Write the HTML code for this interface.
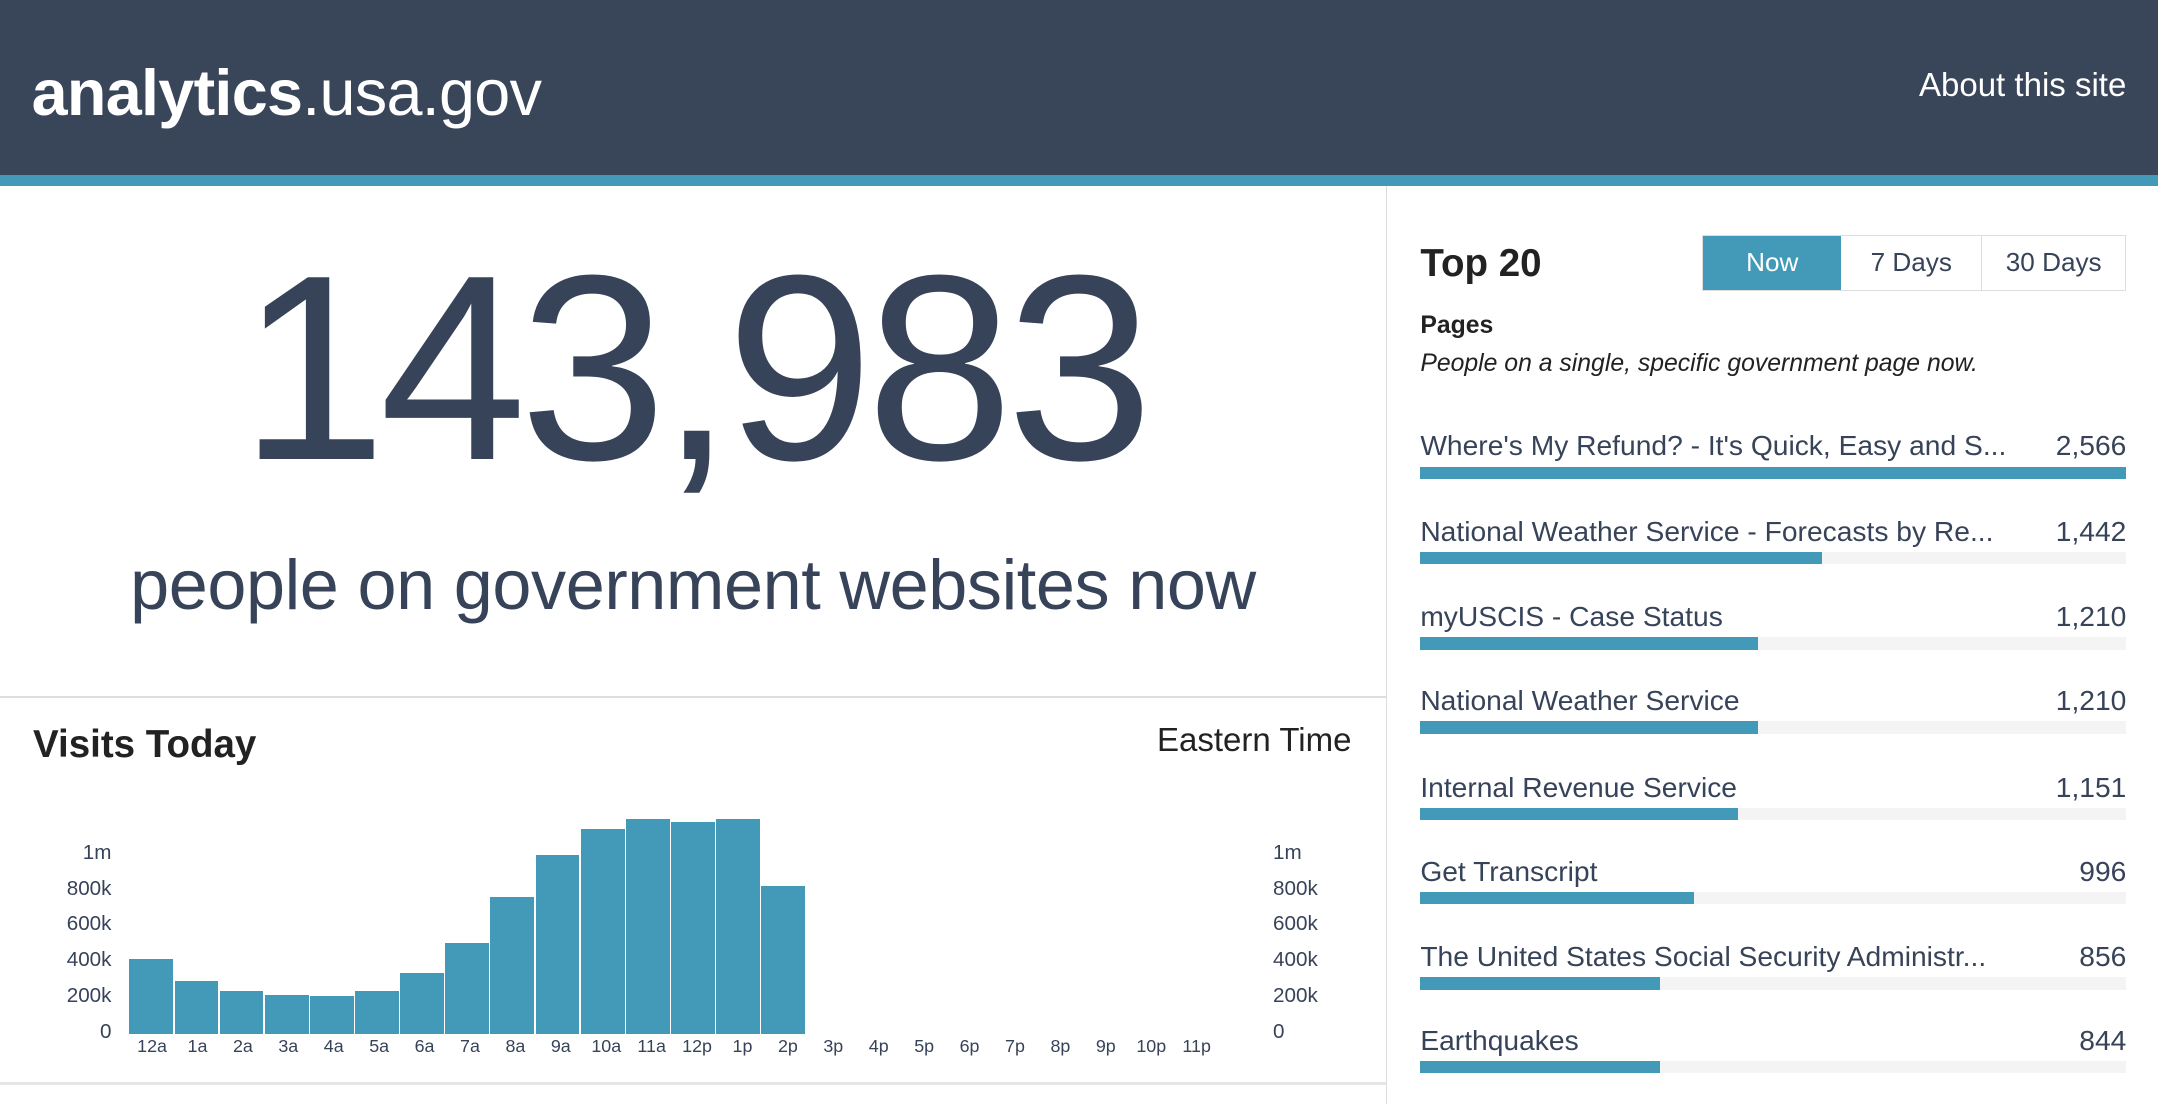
<!DOCTYPE html>
<html><head><meta charset="utf-8"><style>
html,body{margin:0;padding:0;background:#fff;overflow:hidden}
body{width:1568px;height:802px;zoom:1.37628;position:relative;font-family:"Liberation Sans",sans-serif;color:#374359}
.a{position:absolute}
#hdr{left:0;top:0;width:1568px;height:127px;background:#394559}
#bar{left:0;top:127px;width:1568px;height:8px;background:#4299b8}
.bars div{position:absolute;background:#4299b8;width:31.8px;bottom:0}
.xl span{position:absolute;font-size:13px;width:33px;text-align:center;color:#374359}
.yl div{position:absolute;font-size:15px;color:#374359}
.row{position:absolute;left:1032px;width:513px}
.row .t{position:absolute;left:0;top:0;font-size:20.5px;white-space:nowrap}
.row .n{position:absolute;right:0;top:0;font-size:20.5px}
.row .tr{position:absolute;left:0;top:27px;width:513px;height:9px;background:#f4f4f4}
.row .f{position:absolute;left:0;top:27px;height:9px;background:#4299b8}
</style></head><body>
<div id="hdr" class="a"></div><div id="bar" class="a"></div>
<div class="a" style="left:23px;top:40px;font-size:47px;color:#fff;letter-spacing:-0.5px"><b>analytics</b><span>.usa.gov</span></div>
<div class="a" style="left:1345px;top:48px;font-size:24px;color:#fff;width:200px;text-align:right;white-space:nowrap">About this site</div>
<div class="a" style="left:1007px;top:135px;width:1px;height:667px;background:#ddd"></div>
<div class="a" style="left:0;top:162px;width:1007px;text-align:center;font-size:192px;letter-spacing:-5px;line-height:210px">143,983</div>
<div class="a" style="left:0;top:395px;width:1007px;text-align:center;font-size:51px;line-height:60px;letter-spacing:-0.3px">people on government websites now</div>
<div class="a" style="left:0;top:506px;width:1007px;height:1px;background:#ddd"></div>
<div class="a" style="left:0;top:786px;width:1007px;height:2px;background:#e6e6e6"></div>
<div class="a" style="left:24px;top:525px;font-size:28px;font-weight:bold;color:#222">Visits Today</div>
<div class="a" style="left:780px;top:524px;width:202px;text-align:right;font-size:24px;color:#222">Eastern Time</div>
<div class="a bars" style="left:94px;top:500px;width:500px;height:251px">
<div style="left:0;height:54px"></div><div style="left:32.8px;height:38px"></div><div style="left:65.6px;height:31px"></div><div style="left:98.4px;height:28px"></div><div style="left:131.2px;height:27px"></div><div style="left:164px;height:31px"></div><div style="left:196.8px;height:44px"></div><div style="left:229.6px;height:66px"></div><div style="left:262.4px;height:99px"></div><div style="left:295.2px;height:130px"></div><div style="left:328px;height:149px"></div><div style="left:360.8px;height:156px"></div><div style="left:393.6px;height:154px"></div><div style="left:426.4px;height:156px"></div><div style="left:459.2px;height:107px"></div>
</div>
<div class="a xl" style="left:94px;top:753px">
<span style="left:0">12a</span><span style="left:33px">1a</span><span style="left:66px">2a</span><span style="left:99px">3a</span><span style="left:132px">4a</span><span style="left:165px">5a</span><span style="left:198px">6a</span><span style="left:231px">7a</span><span style="left:264px">8a</span><span style="left:297px">9a</span><span style="left:330px">10a</span><span style="left:363px">11a</span><span style="left:396px">12p</span><span style="left:429px">1p</span><span style="left:462px">2p</span><span style="left:495px">3p</span><span style="left:528px">4p</span><span style="left:561px">5p</span><span style="left:594px">6p</span><span style="left:627px">7p</span><span style="left:660px">8p</span><span style="left:693px">9p</span><span style="left:726px">10p</span><span style="left:759px">11p</span>
</div>
<div class="a yl" style="left:0;top:0">
<div style="left:20px;width:61px;text-align:right;top:611px">1m</div><div style="left:20px;width:61px;text-align:right;top:637px">800k</div><div style="left:20px;width:61px;text-align:right;top:663px">600k</div><div style="left:20px;width:61px;text-align:right;top:689px">400k</div><div style="left:20px;width:61px;text-align:right;top:715px">200k</div><div style="left:20px;width:61px;text-align:right;top:741px">0</div>
<div style="left:925px;top:611px">1m</div><div style="left:925px;top:637px">800k</div><div style="left:925px;top:663px">600k</div><div style="left:925px;top:689px">400k</div><div style="left:925px;top:715px">200k</div><div style="left:925px;top:741px">0</div>
</div>
<div class="a" style="left:1032px;top:176px;font-size:28px;font-weight:bold;color:#222">Top 20</div>
<div class="a" style="left:1237px;top:171px;width:306px;height:39px;border:1px solid #ddd;font-size:19px">
<div class="a" style="left:0;top:0;width:100px;height:39px;background:#4299b8;color:#fff;text-align:center;line-height:39px">Now</div>
<div class="a" style="left:100px;top:0;width:102px;height:39px;border-right:1px solid #ddd;text-align:center;line-height:39px">7 Days</div>
<div class="a" style="left:203px;top:0;width:103px;height:39px;text-align:center;line-height:39px">30 Days</div>
</div>
<div class="a" style="left:1032px;top:227px;font-size:18px;font-weight:bold;color:#222">Pages</div>
<div class="a" style="left:1032px;top:254px;font-size:18px;font-style:italic;color:#222">People on a single, specific government page now.</div>
<div class="row" style="top:312px"><div class="t">Where's My Refund? - It's Quick, Easy and S...</div><div class="n">2,566</div><div class="tr"></div><div class="f" style="width:513px"></div></div>
<div class="row" style="top:374px"><div class="t">National Weather Service - Forecasts by Re...</div><div class="n">1,442</div><div class="tr"></div><div class="f" style="width:292px"></div></div>
<div class="row" style="top:436px"><div class="t">myUSCIS - Case Status</div><div class="n">1,210</div><div class="tr"></div><div class="f" style="width:245px"></div></div>
<div class="row" style="top:497px"><div class="t">National Weather Service</div><div class="n">1,210</div><div class="tr"></div><div class="f" style="width:245px"></div></div>
<div class="row" style="top:560px"><div class="t">Internal Revenue Service</div><div class="n">1,151</div><div class="tr"></div><div class="f" style="width:231px"></div></div>
<div class="row" style="top:621px"><div class="t">Get Transcript</div><div class="n">996</div><div class="tr"></div><div class="f" style="width:199px"></div></div>
<div class="row" style="top:683px"><div class="t">The United States Social Security Administr...</div><div class="n">856</div><div class="tr"></div><div class="f" style="width:174px"></div></div>
<div class="row" style="top:744px"><div class="t">Earthquakes</div><div class="n">844</div><div class="tr"></div><div class="f" style="width:174px"></div></div>
</body></html>
